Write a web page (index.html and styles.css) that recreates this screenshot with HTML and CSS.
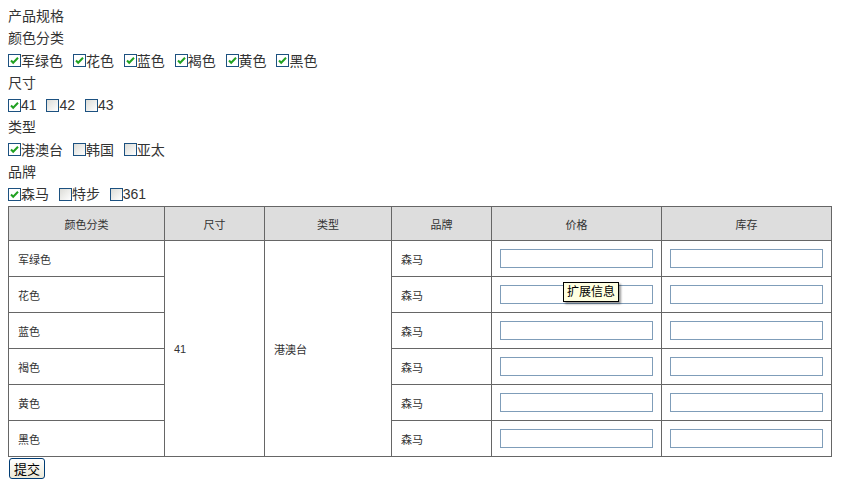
FILE: index.html
```html
<!DOCTYPE html>
<html lang="zh-CN">
<head>
  <meta charset="UTF-8" />
  <title>产品规格</title>
  <link rel="stylesheet" href="styles.css">
</head>
<body>
  <div class="line">产品规格</div>

  <div class="line">颜色分类</div>
  <div class="line">
    <label class="opt"><span class="box on"><svg viewBox="0 0 11 11"><path d="M2 5.5l2.2 2.3L9 2.8"/></svg></span>军绿色</label>
    <label class="opt"><span class="box on"><svg viewBox="0 0 11 11"><path d="M2 5.5l2.2 2.3L9 2.8"/></svg></span>花色</label>
    <label class="opt"><span class="box on"><svg viewBox="0 0 11 11"><path d="M2 5.5l2.2 2.3L9 2.8"/></svg></span>蓝色</label>
    <label class="opt"><span class="box on"><svg viewBox="0 0 11 11"><path d="M2 5.5l2.2 2.3L9 2.8"/></svg></span>褐色</label>
    <label class="opt"><span class="box on"><svg viewBox="0 0 11 11"><path d="M2 5.5l2.2 2.3L9 2.8"/></svg></span>黄色</label>
    <label class="opt"><span class="box on"><svg viewBox="0 0 11 11"><path d="M2 5.5l2.2 2.3L9 2.8"/></svg></span>黑色</label>
  </div>

  <div class="line">尺寸</div>
  <div class="line">
    <label class="opt"><span class="box on"><svg viewBox="0 0 11 11"><path d="M2 5.5l2.2 2.3L9 2.8"/></svg></span>41</label>
    <label class="opt"><span class="box"></span>42</label>
    <label class="opt"><span class="box"></span>43</label>
  </div>

  <div class="line">类型</div>
  <div class="line">
    <label class="opt"><span class="box on"><svg viewBox="0 0 11 11"><path d="M2 5.5l2.2 2.3L9 2.8"/></svg></span>港澳台</label>
    <label class="opt"><span class="box"></span>韩国</label>
    <label class="opt"><span class="box"></span>亚太</label>
  </div>

  <div class="line">品牌</div>
  <div class="line">
    <label class="opt"><span class="box on"><svg viewBox="0 0 11 11"><path d="M2 5.5l2.2 2.3L9 2.8"/></svg></span>森马</label>
    <label class="opt"><span class="box"></span>特步</label>
    <label class="opt"><span class="box"></span>361</label>
  </div>

  <table class="sku">
    <colgroup>
      <col class="c-color"><col class="c-size"><col class="c-type"><col class="c-brand"><col class="c-price"><col class="c-stock">
    </colgroup>
    <thead>
      <tr><th>颜色分类</th><th>尺寸</th><th>类型</th><th>品牌</th><th>价格</th><th>库存</th></tr>
    </thead>
    <tbody>
      <tr>
        <td>军绿色</td>
        <td rowspan="6">41</td>
        <td rowspan="6">港澳台</td>
        <td>森马</td>
        <td class="field"><input type="text"></td>
        <td class="field"><input type="text"></td>
      </tr>
      <tr><td>花色</td><td>森马</td><td class="field"><input type="text"></td><td class="field"><input type="text"></td></tr>
      <tr><td>蓝色</td><td>森马</td><td class="field"><input type="text"></td><td class="field"><input type="text"></td></tr>
      <tr><td>褐色</td><td>森马</td><td class="field"><input type="text"></td><td class="field"><input type="text"></td></tr>
      <tr><td>黄色</td><td>森马</td><td class="field"><input type="text"></td><td class="field"><input type="text"></td></tr>
      <tr><td>黑色</td><td>森马</td><td class="field"><input type="text"></td><td class="field"><input type="text"></td></tr>
    </tbody>
  </table>

  <button class="submit">提交</button>

  <!-- hover hint over the price field -->
  <div class="tip">扩展信息</div>
</body>
</html>
```

FILE: styles.css
```css
body {
  margin: 0;
  padding: 5px 8px 0 8px;
  font-family: "Liberation Sans", "Noto Sans CJK SC", sans-serif;
  font-size: 14px;
  color: #333;
  background: #fff;
}

.line {
  height: 22.25px;
  line-height: 22.25px;
  white-space: nowrap;
}

.opt {
  display: inline-flex;
  align-items: center;
  margin-right: 6px;
}

.box {
  display: inline-block;
  box-sizing: border-box;
  width: 13px;
  height: 13px;
  border: 1px solid #1c5180;
  background: linear-gradient(135deg, #dcdcd7, #fff);
  position: relative;
}

.box svg {
  display: block;
  width: 11px;
  height: 11px;
}

.box svg path {
  fill: none;
  stroke: #21a121;
  stroke-width: 2;
}

.box.on {
  background: #fff;
}

/* sku table */
.sku {
  margin-top: 1px;
  border-collapse: collapse;
  table-layout: fixed;
  width: 823px;
  font-size: 11px;
  color: #333;
}

.c-color { width: 156px; }
.c-size { width: 100px; }
.c-type { width: 127px; }
.c-brand { width: 100px; }
.c-price { width: 170px; }
.c-stock { width: 170px; }

.sku th,
.sku td {
  border: 1px solid #666;
}

.sku th {
  background: #ddd;
  height: 33px;
  padding: 0;
  font-weight: normal;
  text-align: center;
}

.sku td {
  height: 35px;
  padding: 0 0 0 9px;
  text-align: left;
}

.sku td.field {
  padding: 0 8px 0 8px;
}

.field input {
  display: block;
  box-sizing: border-box;
  width: 100%;
  height: 19px;
  margin: 0;
  border: 1px solid #7f9db9;
  padding: 0 2px;
  font-size: 12px;
  outline: none;
}

.submit {
  margin: 1px 0 0 1px;
  padding: 0 4px;
  height: 21px;
  font-family: "Liberation Sans", "Noto Sans CJK SC", sans-serif;
  font-size: 13px;
  color: #000;
  border: 1px solid #003c74;
  border-radius: 3px;
  background: linear-gradient(to bottom, #fff, #ece9d8);
}

.tip {
  position: absolute;
  left: 563px;
  top: 282px;
  padding: 0 3px;
  height: 18px;
  line-height: 18px;
  font-size: 12px;
  color: #000;
  background: #ffffe1;
  border: 1px solid #000;
  box-shadow: 2px 2px 2px rgba(0, 0, 0, 0.4);
}
```
